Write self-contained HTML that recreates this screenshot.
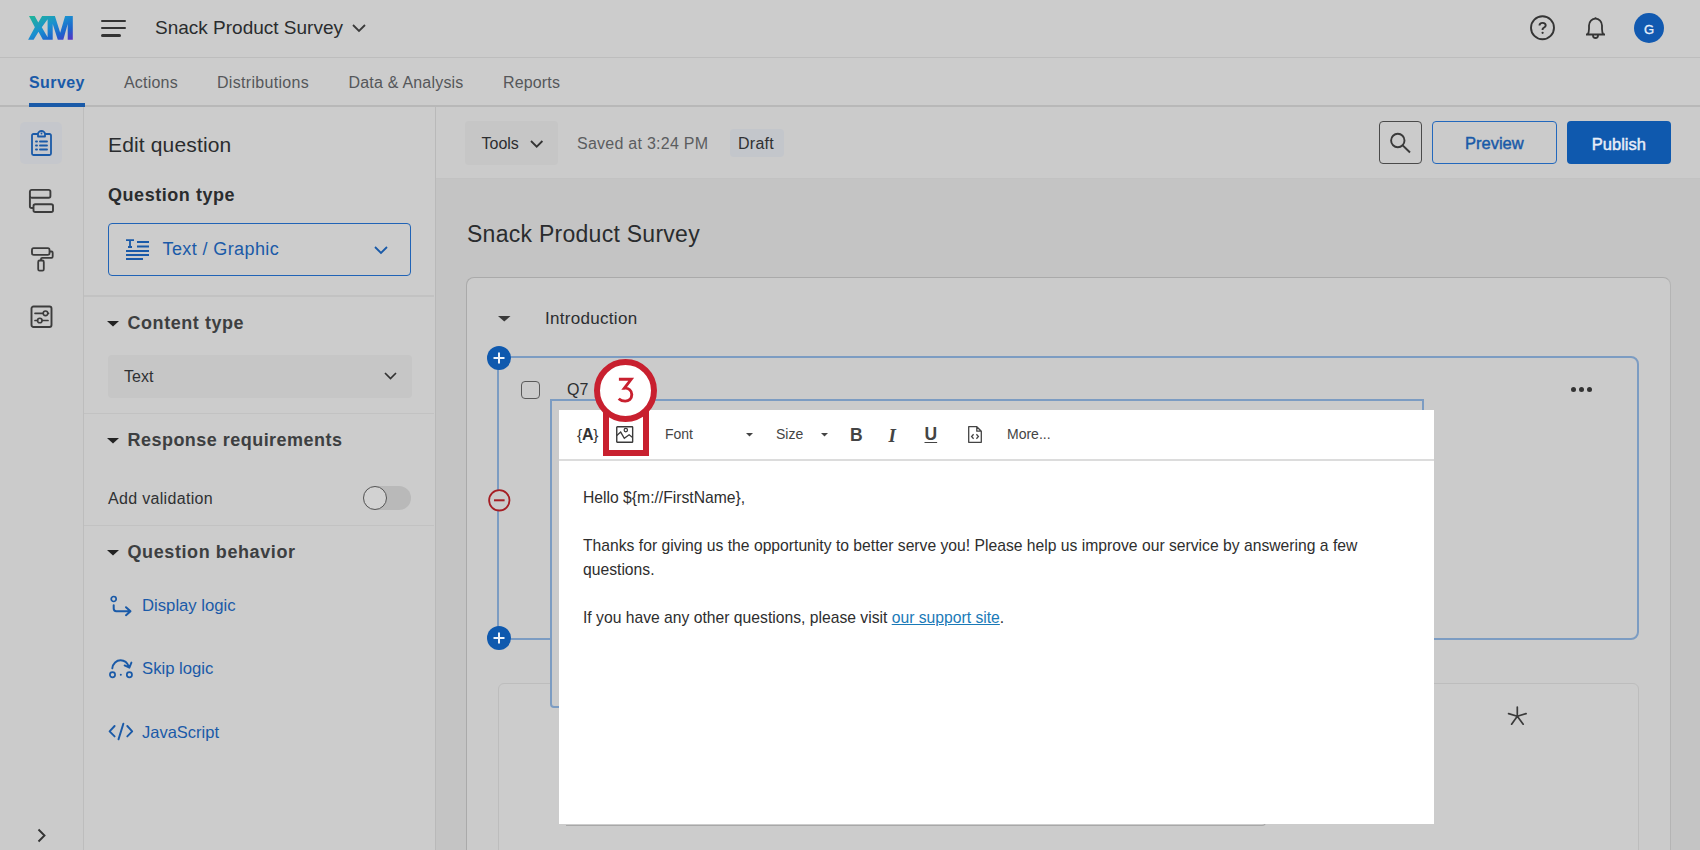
<!DOCTYPE html>
<html><head><meta charset="utf-8">
<style>
*{box-sizing:border-box;margin:0;padding:0}
html,body{width:1700px;height:850px;overflow:hidden;background:#c4c4c4;font-family:"Liberation Sans",sans-serif;color:#2c2e30;position:relative}
.a{position:absolute}
.t{position:absolute;line-height:1;white-space:nowrap}
svg{position:absolute;overflow:visible}
</style></head>
<body>
<!-- header -->
<div class="a" style="left:0;top:0;width:1700px;height:58px;background:#cccccc;border-bottom:1.3px solid #bdbdbd"></div>
<svg style="left:28px;top:16px" width="45" height="24" viewBox="0 0 45 24">
  <defs><linearGradient id="xmg" x1="0" y1="0" x2="1" y2="1">
    <stop offset="0" stop-color="#1fb894"/><stop offset="0.45" stop-color="#1a8fd0"/><stop offset="0.75" stop-color="#1d62cc"/><stop offset="1" stop-color="#5a2fc6"/></linearGradient></defs>
  <path fill="url(#xmg)" fill-rule="evenodd" d="M1 0H6.7L10.3 6.6L14.1 0H26.9L32.2 16.8L37.1 0H44.8V23.7H39.7V8L35.3 23.7H29.8L24.7 8V23.7H14.9L10.5 15.7L5.6 23.7H0.1L6.85 11.3Z M13.8 11.3L19.6 3.3V21.2Z"/>
</svg>
<div class="a" style="left:101px;top:19.5px;width:25px;height:2.6px;background:#333;border-radius:2px"></div>
<div class="a" style="left:101px;top:26.7px;width:25px;height:2.6px;background:#333;border-radius:2px"></div>
<div class="a" style="left:101px;top:34px;width:20px;height:2.6px;background:#333;border-radius:2px"></div>
<div class="t" style="left:155px;top:18px;font-size:19px;color:#2a2c2e">Snack Product Survey</div>
<svg style="left:352px;top:24px" width="14" height="8" viewBox="0 0 14 8"><path d="M1 1L7 7L13 1" fill="none" stroke="#3a3a3a" stroke-width="1.8"/></svg>
<!-- help, bell, avatar -->
<svg style="left:1530px;top:15px" width="25" height="26" viewBox="0 0 25 26"><circle cx="12.5" cy="12.75" r="11.5" fill="none" stroke="#353535" stroke-width="1.9"/><path d="M9.5 10.5C9.5 8.8 10.8 7.9 12.6 7.9C14.4 7.9 15.7 8.9 15.7 10.5C15.7 12.3 13.1 12.5 12.6 14.1V14.9" fill="none" stroke="#353535" stroke-width="1.9"/><circle cx="12.6" cy="17.8" r="1.15" fill="#353535"/></svg>
<svg style="left:1585px;top:16px" width="21" height="23" viewBox="0 0 21 23"><path d="M10.5 1.2V2.6 M2.5 18.5C3.8 17 4 15.5 4 13V9.5C4 5.6 7 2.7 10.5 2.7C14 2.7 17 5.6 17 9.5V13C17 15.5 17.2 17 18.5 18.5Z M1 18.5H20 M8 19.5C8 21.5 9.2 22 10.5 22C11.8 22 13 21.5 13 19.5" fill="none" stroke="#353535" stroke-width="1.8" stroke-linejoin="round"/></svg>
<div class="a" style="left:1634px;top:13px;width:30px;height:30px;border-radius:50%;background:#1159b0"></div>
<div class="t" style="left:1634px;top:22.5px;width:30px;text-align:center;font-size:13px;color:#e6eefa;-webkit-text-stroke:0.35px #e6eefa">G</div>

<!-- nav tabs -->
<div class="a" style="left:0;top:58px;width:1700px;height:49px;background:#cccccc;border-bottom:2px solid #b8b8b8"></div>
<div class="t" style="left:29px;top:74.8px;font-size:16px;font-weight:bold;color:#1a5aa8;letter-spacing:0.42px">Survey</div>
<div class="a" style="left:29px;top:102.5px;width:56px;height:4px;background:#1a5aa8"></div>
<div class="t" style="left:124px;top:74.8px;font-size:16px;color:#55575a;letter-spacing:0.2px">Actions</div>
<div class="t" style="left:217px;top:74.8px;font-size:16px;color:#55575a;letter-spacing:0.3px">Distributions</div>
<div class="t" style="left:348.5px;top:74.8px;font-size:16px;color:#55575a;letter-spacing:0.2px">Data &amp; Analysis</div>
<div class="t" style="left:503px;top:74.8px;font-size:16px;color:#55575a;letter-spacing:0.15px">Reports</div>

<!-- left rail -->
<div class="a" style="left:0;top:107px;width:84px;height:743px;background:#cbcbcb;border-right:1.5px solid #bdbdbd"></div>
<div class="a" style="left:20px;top:121.5px;width:42px;height:42.5px;border-radius:5px;background:#c5c7cc"></div>
<svg style="left:31px;top:130px" width="21" height="26" viewBox="0 0 21 26"><path d="M7 4H2.5C1.7 4 1 4.7 1 5.5V23.5C1 24.3 1.7 25 2.5 25H18.5C19.3 25 20 24.3 20 23.5V5.5C20 4.7 19.3 4 18.5 4H14 M7 4V6.5H14V4C14 2.3 12.4 1 10.5 1C8.6 1 7 2.3 7 4Z" fill="none" stroke="#1a5aa8" stroke-width="1.8" stroke-linejoin="round"/><circle cx="10.5" cy="3.5" r="0.9" fill="#1a5aa8"/><path d="M5 11.5H6 M9 11.5H16 M5 15.5H6 M9 15.5H16 M5 19.5H6 M9 19.5H16" stroke="#1a5aa8" stroke-width="1.9" stroke-linecap="round"/></svg>
<svg style="left:28px;top:188px" width="26" height="26" viewBox="0 0 26 26"><rect x="1.9" y="1.9" width="20.5" height="7.8" rx="1.8" fill="none" stroke="#3c3c3c" stroke-width="1.9"/><rect x="5.5" y="16.2" width="19.5" height="7.8" rx="1.8" fill="none" stroke="#3c3c3c" stroke-width="1.9"/><path d="M1.9 8V18.5C1.9 19.5 2.9 20 3.8 20H5.5" fill="none" stroke="#3c3c3c" stroke-width="1.9"/></svg>
<svg style="left:30px;top:247px" width="24" height="25" viewBox="0 0 24 25"><rect x="2" y="1.2" width="17.5" height="6.6" rx="1.6" fill="none" stroke="#3c3c3c" stroke-width="1.8"/><path d="M1 4.5H2 M19.5 4.5H21.5C22.3 4.5 22.7 5 22.7 5.8V9.5C22.7 10.3 22.3 10.8 21.5 10.8H12.2C11.4 10.8 11 11.3 11 12.1V13.5" fill="none" stroke="#3c3c3c" stroke-width="1.8"/><rect x="8.2" y="13.5" width="5.6" height="10.2" rx="1.4" fill="none" stroke="#3c3c3c" stroke-width="1.8"/></svg>
<svg style="left:30px;top:305px" width="23" height="24" viewBox="0 0 23 24"><rect x="1.5" y="1.5" width="20" height="20.5" rx="2" fill="none" stroke="#3c3c3c" stroke-width="1.9"/><path d="M5 8.3H13 M18 8.3H18.5 M5 15.5H7.5 M12.2 15.5H18" stroke="#3c3c3c" stroke-width="1.7" stroke-linecap="round"/><circle cx="15.5" cy="8.3" r="2.3" fill="none" stroke="#3c3c3c" stroke-width="1.6"/><circle cx="9.8" cy="15.5" r="2.3" fill="none" stroke="#3c3c3c" stroke-width="1.6"/></svg>
<svg style="left:37px;top:828px" width="10" height="15" viewBox="0 0 10 15"><path d="M1.5 1.5L7.5 7.5L1.5 13.5" fill="none" stroke="#333" stroke-width="1.9"/></svg>

<!-- left panel -->
<div class="a" style="left:84px;top:107px;width:352px;height:743px;background:#cccccc;border-right:1.5px solid #b9b9b9"></div>
<div class="t" style="left:108px;top:134.2px;font-size:21px;color:#2a2c2e;letter-spacing:0.15px">Edit question</div>
<div class="t" style="left:108px;top:186.3px;font-size:18px;font-weight:bold;color:#2a2c2e;letter-spacing:0.55px">Question type</div>
<div class="a" style="left:108px;top:223px;width:303px;height:52.5px;border:1.6px solid #2063b6;border-radius:4px"></div>
<svg style="left:125px;top:239px" width="25" height="21" viewBox="0 0 25 21"><path d="M1 1.2H9 M5 1.2V8 M3 8H7 M12 3H24 M12 7.5H24 M1 12H24 M1 16H24 M1 20H18" fill="none" stroke="#1a5aa8" stroke-width="1.8"/></svg>
<div class="t" style="left:162.5px;top:239.8px;font-size:18px;color:#1a5aa8;letter-spacing:0.4px">Text / Graphic</div>
<svg style="left:374px;top:246px" width="14" height="8" viewBox="0 0 14 8"><path d="M1 1L7 7L13 1" fill="none" stroke="#1a5aa8" stroke-width="1.8"/></svg>
<div class="a" style="left:84px;top:295px;width:350px;height:1.5px;background:#c2c2c2"></div>
<!-- content type -->
<svg style="left:106.5px;top:321px" width="12" height="6" viewBox="0 0 12 6"><path d="M0 0H12L6 5.5Z" fill="#222"/></svg>
<div class="t" style="left:127.5px;top:314px;font-size:18px;font-weight:bold;color:#3d3f41;letter-spacing:0.55px">Content type</div>
<div class="a" style="left:107.5px;top:354.5px;width:304px;height:43.5px;border-radius:4px;background:#c6c6c6"></div>
<div class="t" style="left:124px;top:368.5px;font-size:16px;color:#2f3133">Text</div>
<svg style="left:383.5px;top:372.3px" width="14" height="8" viewBox="0 0 14 8"><path d="M1 1L6.5 6.5L12 1" fill="none" stroke="#333" stroke-width="1.7"/></svg>
<div class="a" style="left:84px;top:412.5px;width:350px;height:1.5px;background:#c2c2c2"></div>
<!-- response req -->
<svg style="left:106.5px;top:438px" width="12" height="6" viewBox="0 0 12 6"><path d="M0 0H12L6 5.5Z" fill="#222"/></svg>
<div class="t" style="left:127.5px;top:431.3px;font-size:18px;font-weight:bold;color:#3d3f41;letter-spacing:0.47px">Response requirements</div>
<div class="t" style="left:108px;top:491px;font-size:16px;color:#2f3133;letter-spacing:0.32px">Add validation</div>
<div class="a" style="left:362.5px;top:486px;width:48px;height:24px;border-radius:12px;background:#b9b9b9"></div>
<div class="a" style="left:362.5px;top:486px;width:24px;height:24px;border-radius:50%;background:#d2d2d2;border:1.5px solid #555"></div>
<div class="a" style="left:84px;top:524.5px;width:350px;height:1.5px;background:#c2c2c2"></div>
<!-- question behavior -->
<svg style="left:106.5px;top:550px" width="12" height="6" viewBox="0 0 12 6"><path d="M0 0H12L6 5.5Z" fill="#222"/></svg>
<div class="t" style="left:127.5px;top:543.2px;font-size:18px;font-weight:bold;color:#3d3f41;letter-spacing:0.59px">Question behavior</div>
<svg style="left:109px;top:595px" width="24" height="22" viewBox="0 0 24 22"><circle cx="4.7" cy="4" r="2.5" fill="none" stroke="#1a5aa8" stroke-width="1.7"/><path d="M4.7 10.2V13.5Q4.7 16.2 7.4 16.2H21.3 M17 12.2L21.5 16.2L17 20.2" fill="none" stroke="#1a5aa8" stroke-width="2" stroke-linecap="round" stroke-linejoin="round"/></svg>
<div class="t" style="left:142px;top:597.5px;font-size:16.7px;color:#1a5aa8">Display logic</div>
<svg style="left:108px;top:659px" width="26" height="20" viewBox="0 0 26 20"><path d="M4.3 9.4C4.8 4.5 8.5 1.3 12.6 1.3C16.5 1.3 19.5 4 21.2 8.2 M23.4 3.6L21.4 8.7L16.6 6.4" fill="none" stroke="#1a5aa8" stroke-width="1.9" stroke-linecap="round" stroke-linejoin="round"/><circle cx="4.5" cy="15.8" r="2.6" fill="none" stroke="#1a5aa8" stroke-width="1.7"/><circle cx="21.4" cy="15.8" r="2.6" fill="none" stroke="#1a5aa8" stroke-width="1.7"/><circle cx="12.8" cy="15.8" r="1" fill="#1a5aa8"/></svg>
<div class="t" style="left:142px;top:660.5px;font-size:16.7px;color:#1a5aa8">Skip logic</div>
<svg style="left:108px;top:723px" width="26" height="18" viewBox="0 0 26 18"><path d="M6.6 3L1.6 8.3L6.6 13.4 M19.3 3L24.2 8.3L19.3 13.4 M15.4 0.6L10.5 16.4" fill="none" stroke="#1a5aa8" stroke-width="1.9" stroke-linecap="round" stroke-linejoin="round"/></svg>
<div class="t" style="left:142px;top:723.5px;font-size:16.5px;color:#1a5aa8">JavaScript</div>

<!-- main toolbar -->
<div class="a" style="left:436px;top:107px;width:1264px;height:71.5px;background:#cbcbcb;border-bottom:1.5px solid #c2c2c2"></div>
<div class="a" style="left:465px;top:121px;width:92.5px;height:43.5px;border-radius:4px;background:#c6c6c6"></div>
<div class="t" style="left:481.5px;top:135.8px;font-size:16px;color:#2c2e30">Tools</div>
<svg style="left:530px;top:139.5px" width="14" height="8" viewBox="0 0 14 8"><path d="M1 1L6.7 6.7L12.4 1" fill="none" stroke="#333" stroke-width="1.8"/></svg>
<div class="t" style="left:577px;top:135.8px;font-size:16px;color:#5b5d60;letter-spacing:0.26px">Saved at 3:24 PM</div>
<div class="a" style="left:729.5px;top:129.3px;width:54.5px;height:27.5px;border-radius:4px;background:#c3c6cb"></div>
<div class="t" style="left:738px;top:135.8px;font-size:16px;color:#2f3133;letter-spacing:0.26px">Draft</div>
<div class="a" style="left:1378.5px;top:121.3px;width:43.3px;height:43px;border-radius:4px;border:1.6px solid #4a4a4a"></div>
<svg style="left:1389px;top:132px" width="23" height="22" viewBox="0 0 23 22"><circle cx="8.8" cy="8.5" r="6.7" fill="none" stroke="#3a3a3a" stroke-width="1.9"/><path d="M13.7 13.4L21 20.5" stroke="#3a3a3a" stroke-width="2"/></svg>
<div class="a" style="left:1431.7px;top:121.3px;width:125.3px;height:43px;border-radius:4px;border:1.6px solid #2368bd"></div>
<div class="t" style="left:1431.7px;top:135px;width:125.3px;text-align:center;font-size:16.5px;color:#1a5aa8;-webkit-text-stroke:0.45px #1a5aa8">Preview</div>
<div class="a" style="left:1567px;top:121.3px;width:103.8px;height:43px;border-radius:4px;background:#0f59ae"></div>
<div class="t" style="left:1567px;top:136px;width:103.8px;text-align:center;font-size:16.5px;color:#e8eef7;-webkit-text-stroke:0.45px #e8eef7">Publish</div>

<!-- canvas -->
<div class="t" style="left:467px;top:223px;font-size:23px;color:#2a2c2e;letter-spacing:0.27px">Snack Product Survey</div>
<div class="a" style="left:465.5px;top:277px;width:1205px;height:600px;border-radius:8px;background:#cbcbcb;border:1.3px solid #aaaaaa;border-right-color:#b4b4b4"></div>
<svg style="left:497.5px;top:316px" width="13" height="6" viewBox="0 0 13 6"><path d="M0 0H12.5L6.25 5.5Z" fill="#3a3a3a"/></svg>
<div class="t" style="left:545px;top:309.8px;font-size:17px;color:#2c2e30;letter-spacing:0.3px">Introduction</div>

<!-- second card -->
<div class="a" style="left:497.5px;top:683px;width:1141.5px;height:200px;border-radius:6px;background:#cccccc;border:1.5px solid #bdbdbd"></div>
<svg style="left:1507px;top:706px" width="21" height="20" viewBox="0 0 21 20"><path d="M10.3 1V10.2 M10.3 10.2L1.6 7.6 M10.3 10.2L19.1 7.6 M10.3 10.2L4.6 18.2 M10.3 10.2L16.2 18.2" stroke="#3a3a3a" stroke-width="1.7" stroke-linecap="round"/></svg>

<!-- question box -->
<div class="a" style="left:497px;top:356px;width:1142px;height:284px;border-radius:8px;background:#cbcbcb;border:2px solid #7c9cc2"></div>
<div class="a" style="left:521px;top:380.5px;width:19px;height:18.5px;border-radius:4px;border:1.5px solid #5a5a5a;background:#cccccc"></div>
<div class="t" style="left:567px;top:381.9px;font-size:16px;color:#2c2e30">Q7</div>
<div class="a" style="left:1571.3px;top:386.9px;width:5px;height:5px;border-radius:50%;background:#333"></div>
<div class="a" style="left:1578.9px;top:386.9px;width:5px;height:5px;border-radius:50%;background:#333"></div>
<div class="a" style="left:1586.7px;top:386.9px;width:5px;height:5px;border-radius:50%;background:#333"></div>
<!-- inner editor frame -->
<div class="a" style="left:550px;top:399px;width:874px;height:309px;border-radius:0 0 0 4px;border:2px solid #7c9cc2;background:#cbcbcb"></div>
<div class="a" style="left:566px;top:822px;width:700px;height:4px;border-bottom:1.5px solid #a8a8a8;border-right:1.5px solid #a8a8a8;border-radius:0 0 4px 0"></div><div class="a" style="left:1256px;top:822px;width:2px;height:2px;background:#777"></div><div class="a" style="left:1261px;top:822px;width:2px;height:2px;background:#777"></div>
<!-- plus/minus -->
<div class="a" style="left:487px;top:346px;width:24px;height:24px;border-radius:50%;background:#0f59ae"></div>
<svg style="left:487px;top:346px" width="24" height="24" viewBox="0 0 24 24"><path d="M12 6.5V17.5 M6.5 12H17.5" stroke="#eef3fa" stroke-width="2"/></svg>
<div class="a" style="left:487px;top:626px;width:24px;height:24px;border-radius:50%;background:#0f59ae"></div>
<svg style="left:487px;top:626px" width="24" height="24" viewBox="0 0 24 24"><path d="M12 6.5V17.5 M6.5 12H17.5" stroke="#eef3fa" stroke-width="2"/></svg>
<svg style="left:487.5px;top:489px" width="23" height="23" viewBox="0 0 23 23"><circle cx="11.3" cy="11.3" r="10.2" fill="#cbcbcb" stroke="#a51e24" stroke-width="1.8"/><path d="M6 11.3H16.6" stroke="#a51e24" stroke-width="2"/></svg>

<!-- popup editor -->
<div class="a" style="left:559px;top:410px;width:875px;height:413.5px;background:#fff"></div>
<div class="a" style="left:559px;top:459px;width:875px;height:1.5px;background:#dcdcdc"></div>
<div class="t" style="left:577px;top:426.8px;font-size:15.5px;color:#333;letter-spacing:-0.3px">{<b style="font-size:16px">A</b>}</div>
<svg style="left:616px;top:426px" width="18" height="17" viewBox="0 0 18 17"><rect x="0.75" y="0.75" width="15.9" height="15.5" rx="0.6" fill="none" stroke="#3a3a3a" stroke-width="1.4"/><path d="M0.8 9.6L4.7 6.1L8.3 12.3L13.1 8.8L16.6 11.4" fill="none" stroke="#3a3a3a" stroke-width="1.3"/><circle cx="9.8" cy="4.1" r="1.7" fill="none" stroke="#3a3a3a" stroke-width="1.2"/></svg>
<div class="t" style="left:665px;top:426.8px;font-size:14px;color:#444">Font</div>
<svg style="left:745.5px;top:433px" width="7" height="4" viewBox="0 0 7 4"><path d="M0 0H7L3.5 3.5Z" fill="#444"/></svg>
<div class="t" style="left:776px;top:427.1px;font-size:14px;color:#444">Size</div>
<svg style="left:820.5px;top:433px" width="7" height="4" viewBox="0 0 7 4"><path d="M0 0H7L3.5 3.5Z" fill="#444"/></svg>
<div class="t" style="left:850px;top:426.5px;font-size:17.5px;font-weight:bold;color:#444">B</div>
<div class="t" style="left:888.5px;top:425.8px;font-size:19px;font-weight:bold;font-style:italic;font-family:'Liberation Serif',serif;color:#444">I</div>
<div class="t" style="left:924.5px;top:426px;font-size:17.5px;font-weight:bold;color:#444;text-decoration:underline;text-underline-offset:2px">U</div>
<svg style="left:967.5px;top:426px" width="14" height="17" viewBox="0 0 14 17"><path d="M0.7 0.7H8.8L13.3 5.2V16.3H0.7Z M8.8 0.7V5.2H13.3" fill="none" stroke="#444" stroke-width="1.3" stroke-linejoin="round"/><path d="M5.6 8.3L3.6 10.5L5.6 12.7 M8.4 8.3L10.4 10.5L8.4 12.7" fill="none" stroke="#444" stroke-width="1.3"/></svg>
<div class="t" style="left:1007px;top:427.1px;font-size:14px;color:#444">More...</div>
<div class="t" style="left:583px;top:489.8px;font-size:15.7px;color:#2e2e2e">Hello ${m://FirstName},</div>
<div class="t" style="left:583px;top:537.5px;font-size:15.7px;color:#2e2e2e">Thanks for giving us the opportunity to better serve you! Please help us improve our service by answering a few</div>
<div class="t" style="left:583px;top:562.2px;font-size:15.7px;color:#2e2e2e">questions.</div>
<div class="t" style="left:583px;top:609.8px;font-size:15.7px;color:#2e2e2e">If you have any other questions, please visit <span style="color:#1a7ab8;text-decoration:underline">our support site</span>.</div>

<!-- red annotation -->
<div class="a" style="left:603px;top:405px;width:46px;height:51px;border:6px solid #c8202f"></div>
<div class="a" style="left:594.3px;top:358.8px;width:63px;height:63px;border-radius:50%;background:#fff;border:6px solid #c8202f"></div>
<svg style="left:615px;top:375px" width="22" height="30" viewBox="0 0 22 30"><path d="M3.9 4.3H16.2L9.4 13.2C13.7 12.9 16.8 15.5 16.8 19.6C16.8 23.6 13.9 26.1 10.2 26.1C7.7 26.1 5.4 25.3 3.7 23.7" fill="none" stroke="#c8202f" stroke-width="2.9"/></svg>
</body></html>
